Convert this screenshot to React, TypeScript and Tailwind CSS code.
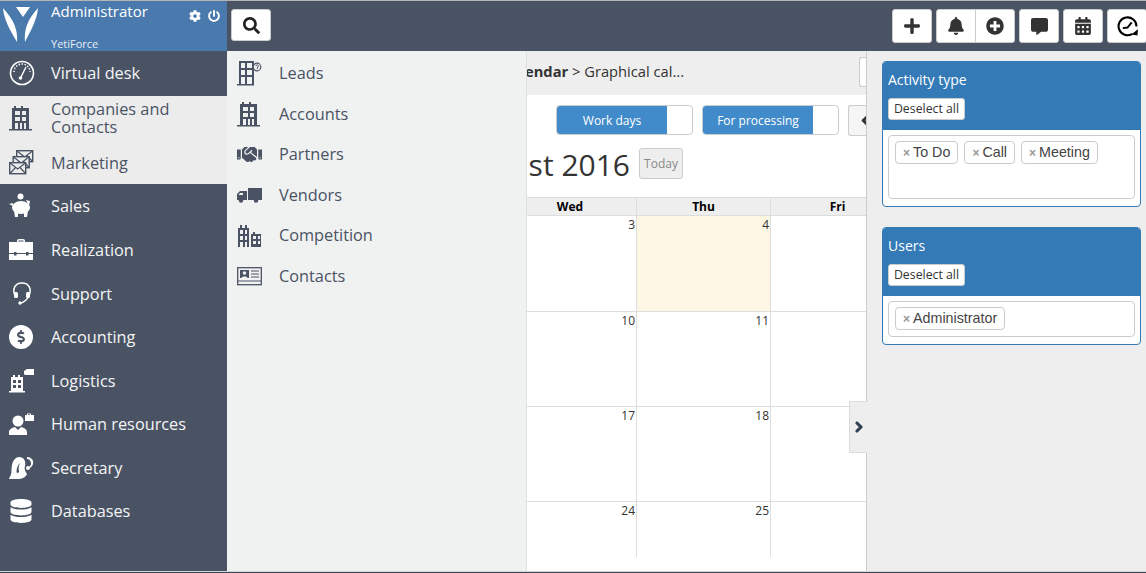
import type { ReactNode } from 'react';
import {
  FaBell,
  FaCalendarAlt,
  FaChevronLeft,
  FaChevronRight,
  FaCog,
  FaCommentAlt,
  FaDatabase,
  FaDollarSign,
  FaHandshake,
  FaPlus,
  FaPlusCircle,
  FaPowerOff,
  FaSearch,
} from 'react-icons/fa';

const openSans = "font-['Open_Sans','Noto_Sans',sans-serif]";

function Logo() {
  return (
    <svg width="40" height="44" viewBox="0 0 40 44" fill="white">
      <path d="M16 6h14l-7 10z" />
      <path d="M3 7c1 12 7 22 14 34 1-12-3-22-14-34z" />
      <path d="M38 7c-1 12-7 22-13 34-1-12 2-22 13-34z" />
    </svg>
  );
}

function Gauge() {
  return (
    <svg width="26" height="26" viewBox="0 0 26 26" fill="none" stroke="white">
      <circle cx="13" cy="13" r="11.500" strokeWidth="1.600" />
      <path d="M5 12a8 8 0 0 1 16 0" strokeWidth="1.400" strokeDasharray="1.500 1.500" />
      <path d="M12 17l5-10" strokeWidth="1.400" />
      <circle cx="11.500" cy="18" r="1.800" fill="white" stroke="none" />
    </svg>
  );
}

function Building() {
  return (
    <svg width="24" height="26" viewBox="0 0 24 26" fill="currentColor">
      <path
        fillRule="evenodd"
        d="M3 3h2V1h2v2h5V1h2v2h6v21H3zM6 6v4h5V6zm7 0v4h4V6zM6 12v4h5v-4zm7 0v4h4v-4zM6 18v6h3v-6zm5 0v6h2v-6zm4 0v6h2v-6z"
      />
      <rect x="0" y="24" width="23" height="1.500" />
    </svg>
  );
}

function LeadBuilding() {
  return (
    <svg width="25" height="26" viewBox="0 0 25 26" fill="currentColor">
      <path
        fillRule="evenodd"
        d="M2 1h15v23H2zM4 3v5h4V3zm6 0v5h5V3zM4 10v5h4v-5zm6 0v5h5v-5zM4 17v7h4v-7zm6 0v7h5v-7z"
      />
      <rect x="0" y="24" width="17" height="1.500" />
      <circle cx="20" cy="7" r="3.800" fill="#f0f1f1" stroke="currentColor" strokeWidth="1.200" />
      <path d="M18.800 6a1.300 1.300 0 1 1 1.500 1.500V9" fill="none" stroke="currentColor" strokeWidth="1" />
    </svg>
  );
}

function Envelope({ x, y }: { x: number; y: number }) {
  return (
    <g transform={`translate(${x} ${y})`}>
      <rect x="0.700" y="0.700" width="16" height="11" fill="#ececec" stroke="currentColor" strokeWidth="1.400" />
      <path d="M1 1l7.700 6 7.700-6M1 11.500l5.500-6M16.500 11.500l-5.500-6" fill="none" stroke="currentColor" strokeWidth="1.200" />
    </g>
  );
}

function Envelopes() {
  return (
    <svg width="25" height="25" viewBox="0 0 25 25">
      <Envelope x={7} y={0} />
      <Envelope x={3.500} y={6} />
      <Envelope x={0} y={12} />
    </svg>
  );
}

function Piggy() {
  return (
    <svg width="24" height="25" viewBox="0 0 24 25" fill="white">
      <circle cx="11.500" cy="3.500" r="3" />
      <ellipse cx="12" cy="14.500" rx="9" ry="6.500" />
      <path d="M17 7l4 1-1 5zM0 11l4-1v3zM5 18h4v6H6zM15 18h4l-1 6h-3z" />
    </svg>
  );
}

function Briefcase() {
  return (
    <svg width="24" height="23" viewBox="0 0 24 23" fill="white">
      <path fillRule="evenodd" d="M8 4V2.500Q8 1 10 1h4q2 0 2 1.500V4zM9.500 3.500h5V2.500h-5z" />
      <rect x="0" y="4" width="24" height="11" />
      <rect x="0" y="16" width="24" height="6" />
      <rect x="5" y="14" width="2.500" height="3.500" fill="#4a5364" />
      <rect x="17" y="14" width="2.500" height="3.500" fill="#4a5364" />
    </svg>
  );
}

function Headset() {
  return (
    <svg width="18" height="24" viewBox="0 0 18 24" fill="none" stroke="white" strokeWidth="1.500" className="ml-[4px]">
      <path d="M2 14C-1 7 2 1 9 1s10 6 7 13c-1 2-2 3-3 4" />
      <rect x="1" y="10" width="4" height="6" rx="1.500" fill="white" stroke="none" />
      <rect x="13" y="10" width="4" height="6" rx="1.500" fill="white" stroke="none" />
      <path d="M13 18c-2 2-4 3-6 3" />
      <circle cx="7" cy="21" r="1.700" fill="white" stroke="none" />
    </svg>
  );
}

function Logistics() {
  return (
    <svg width="25" height="25" viewBox="0 0 25 25" fill="white">
      <path
        fillRule="evenodd"
        d="M2 9h2V7h2v2h3V7h2v2h3v14H2zM4 12v3h3v-3zm5 0v3h3v-3zM4 17v3h3v-3zm5 0v3h3v-3z"
      />
      <rect x="0" y="23" width="16" height="1.500" />
      <path d="M15 3l3-2h7v6h-9l-1-1z" />
    </svg>
  );
}

function Person() {
  return (
    <svg width="25" height="24" viewBox="0 0 25 24" fill="white">
      <circle cx="9" cy="9" r="5.500" />
      <path d="M0 23v-3c0-3 4-4.500 6-5l3 3 3-3c2 .5 6 2 6 5v3z" />
      <path fillRule="evenodd" d="M18 3V1.500h4V3h3v6h-9V3zM19 3h2v-.7h-2z" />
    </svg>
  );
}

function Secretary() {
  return (
    <svg width="25" height="24" viewBox="0 0 25 24" fill="white">
      <path d="M10 1c5 0 7 4 6 9-1 3 0 5 2 8-1 3-5 5-9 5H0c0-2 2-3 2-5 1-2 0-5 1-9 1-5 4-8 7-8z" />
      <path d="M11 7c-1 2-2 5-1 8 .5 1.500-2 3-2.500 1 0-3 1-7 3.500-9z" fill="#4a5364" />
      <path d="M18 1c4 0 7 3 6 7-.5 2-2 3-3 4l-1-1c1-1 2-2 2-3 .5-3-2-5-4-5zM19 10a2 2 0 1 1 0 4 2 2 0 0 1 0-4z" />
    </svg>
  );
}

function Truck() {
  return (
    <svg width="25" height="15" viewBox="0 0 25 15" fill="currentColor">
      <rect x="11" y="0" width="14" height="12" />
      <path fillRule="evenodd" d="M0 6l3-3h7v9H0zM3 5L1.500 7H6V5z" />
      <circle cx="4" cy="12.500" r="2.200" />
      <circle cx="19" cy="12.500" r="2.200" />
    </svg>
  );
}

function Competition() {
  return (
    <svg width="25" height="24" viewBox="0 0 25 24" fill="currentColor">
      <path
        fillRule="evenodd"
        d="M1 4h2V1h2v3h3V1h2v3h2v19H1zM3 6v4h3V6zm5 0v4h2V6zM3 12v4h3v-4zm5 0v4h2v-4zM3 18v5h3v-5zm5 0v5h2v-5z"
      />
      <path
        fillRule="evenodd"
        d="M14 10h2V8h2v2h6v13H14zm2 2v3h3v-3zm5 0v3h2v-3zm-5 5v3h3v-3zm5 0v3h2v-3z"
      />
    </svg>
  );
}

function ContactCard() {
  return (
    <svg width="25" height="19" viewBox="0 0 25 19" fill="none" stroke="currentColor">
      <rect x="0.700" y="0.700" width="23.600" height="17" strokeWidth="1.300" />
      <rect x="3" y="3" width="9" height="8" fill="currentColor" stroke="none" />
      <circle cx="7.500" cy="6" r="1.800" fill="#f0f1f1" stroke="none" />
      <path d="M4.500 11c0-2 6-2 6 0z" fill="#f0f1f1" stroke="none" />
      <path d="M14 4h8M14 7h8M14 10h8M1 14h23" strokeWidth="1" />
    </svg>
  );
}

function ClockHistory() {
  return (
    <svg width="21" height="21" viewBox="0 0 20 20" fill="none" stroke="black">
      <path d="M14.500 17A8.500 8.500 0 1 1 18.500 10" strokeWidth="2" />
      <path d="M5.500 11.500L10 11l4-5" strokeWidth="1.800" />
      <path d="M20 12.500l-.5 6-6-1z" fill="black" stroke="none" />
    </svg>
  );
}

function MainItem({ icon, label, h, active }: { icon: ReactNode; label: ReactNode; h: string; active?: boolean }) {
  return (
    <div className={`flex items-center ${h} ${active ? 'bg-[#ececec] text-[#4a5364]' : 'text-[#f4f5f6]'}`}>
      <div className="flex w-[51px] shrink-0 justify-start pl-[9px]">{icon}</div>
      <div className="text-[16.300px] leading-[18px]">{label}</div>
    </div>
  );
}

function SubItem({ icon, label }: { icon: ReactNode; label: string }) {
  return (
    <div className="flex h-[40.600px] items-center text-[#4a5364]">
      <div className="flex w-[52px] shrink-0 pl-[10px]">{icon}</div>
      <div className="text-[16.300px]">{label}</div>
    </div>
  );
}

function Sidebar() {
  return (
    <aside className="flex w-[227px] shrink-0 flex-col bg-[#4a5364]">
      <div className="flex h-[50px] bg-[#4a7aad] text-white">
        <div className="w-[51px] shrink-0">
          <Logo />
        </div>
        <div className="flex flex-1 flex-col justify-between">
          <div className="text-[15px] leading-[20px]">Administrator</div>
          <div className="text-[11px] leading-[14px] text-[#e6edf4]">YetiForce</div>
        </div>
        <div className="flex gap-[7px] pr-[7px] pt-[9px]">
          <FaCog size={12} />
          <FaPowerOff size={12} />
        </div>
      </div>
      <MainItem h="h-[45px] pb-[2px]" icon={<Gauge />} label="Virtual desk" />
      <MainItem h="h-[45px] pb-[2px]" active icon={<Building />} label="Companies and Contacts" />
      <MainItem h="h-[43px]" active icon={<Envelopes />} label="Marketing" />
      <MainItem h="h-[43.700px]" icon={<Piggy />} label="Sales" />
      <MainItem h="h-[43.700px]" icon={<Briefcase />} label="Realization" />
      <MainItem h="h-[43.700px] pt-px" icon={<Headset />} label="Support" />
      <MainItem
        h="h-[43.700px]"
        icon={
          <div className="flex h-[24px] w-[24px] items-center justify-center rounded-full bg-white text-[#4a5364]">
            <FaDollarSign size={14} />
          </div>
        }
        label="Accounting"
      />
      <MainItem h="h-[43.700px]" icon={<Logistics />} label="Logistics" />
      <MainItem h="h-[43.700px]" icon={<Person />} label="Human resources" />
      <MainItem h="h-[43.700px]" icon={<Secretary />} label="Secretary" />
      <MainItem h="h-[43px]" icon={<FaDatabase size={24} color="white" />} label="Databases" />
    </aside>
  );
}

function TopButton({ children, className = '' }: { children: ReactNode; className?: string }) {
  return (
    <div className={`flex h-[34px] items-center justify-center rounded-[3px] border border-[#ccc] bg-white text-[#333] ${className}`}>
      {children}
    </div>
  );
}

function TopBar() {
  return (
    <header className="flex h-[50px] shrink-0 items-start justify-between overflow-hidden bg-[#4a5364] pl-[4px] pt-[8px]">
      <div className="flex h-[32px] w-[40px] items-center justify-center rounded-[3px] border border-[#ccc] bg-white text-[#222]">
        <FaSearch size={17} />
      </div>
      <div className="-mr-[1px] flex gap-[4px]">
        <TopButton className="w-[40px]">
          <FaPlus size={18} />
        </TopButton>
        <div className="flex h-[34px] w-[79px] rounded-[3px] border border-[#ccc] bg-white text-[#333]">
          <div className="flex flex-1 items-center justify-center border-r border-[#ccc]">
            <FaBell size={18} />
          </div>
          <div className="flex flex-1 items-center justify-center">
            <FaPlusCircle size={18} />
          </div>
        </div>
        <TopButton className="w-[40px]">
          <FaCommentAlt size={17} />
        </TopButton>
        <TopButton className="w-[40px]">
          <FaCalendarAlt size={18} />
        </TopButton>
        <TopButton className="w-[40px]">
          <ClockHistory />
        </TopButton>
      </div>
    </header>
  );
}

function Toggle({ label }: { label: string }) {
  return (
    <div className="flex h-[30px] w-[137px] overflow-hidden rounded-[4px] border border-[#ccc] bg-white">
      <div className="flex w-[110px] items-center justify-center bg-[#428bca] pt-[2px] text-[12px] text-white">{label}</div>
    </div>
  );
}

function DayCell({ day, today }: { day?: number; today?: boolean }) {
  return (
    <div className={`border-r border-b border-[#ddd] pr-[1px] text-right text-[12px] leading-[18px] text-[#333] last:border-r-0 ${today ? 'bg-[#fcf6e3]' : ''}`}>
      {day}
    </div>
  );
}

function Calendar() {
  return (
    <div className="flex w-[340px] shrink-0 flex-col overflow-hidden border-r border-[#ccc] bg-white">
      <div className="flex h-[44px] shrink-0 items-start justify-end overflow-hidden whitespace-nowrap bg-[#eee] pt-[6px] text-[#333]">
        <div className="pt-[4px] text-[14.700px] leading-[20px]">
          <span className="font-bold">Calendar</span> &gt; Graphical cal...
        </div>
        <div className="ml-[175px] h-[30px] w-[7px] shrink-0 rounded-l-[3px] border border-r-0 border-[#ccc] bg-white" />
      </div>
      <div className="flex h-[53px] shrink-0 justify-end gap-[9px] overflow-hidden pt-[10px]">
        <Toggle label="Work days" />
        <Toggle label="For processing" />
        <div className="flex h-[31px] w-[18px] items-center overflow-hidden rounded-l-[3px] border border-r-0 border-[#ccc] bg-[#f5f5f5] pl-[10px] text-[#333]">
          <FaChevronLeft size={13} className="shrink-0" stroke="currentColor" strokeWidth={40} />
        </div>
      </div>
      <div className="flex h-[49px] shrink-0 items-start justify-end gap-[9px] overflow-hidden whitespace-nowrap pr-[183px]">
        <div className="-mt-px text-[30px] leading-[36px] text-[#333]">August 2016</div>
        <div className="flex h-[31px] w-[44px] shrink-0 items-center justify-center rounded-[3px] border border-[#ccc] bg-[#eee] text-[12px] text-[#888]">
          Today
        </div>
      </div>
      <div className="-ml-[23px] grid grid-cols-[133px_134px_134px] border-t border-[#ddd]">
        {['Wed', 'Thu', 'Fri'].map((d) => (
          <div key={d} className="h-[18px] border-r border-b border-[#ddd] bg-[#eee] text-center text-[12px] font-bold leading-[17px] text-black">
            {d}
          </div>
        ))}
        <div className="contents [&>div]:h-[96px]">
          <DayCell day={3} />
          <DayCell day={4} today />
          <DayCell />
        </div>
        <div className="contents [&>div]:h-[95px]">
          <DayCell day={10} />
          <DayCell day={11} />
          <DayCell />
        </div>
        <div className="contents [&>div]:h-[95px]">
          <DayCell day={17} />
          <DayCell day={18} />
          <DayCell />
        </div>
        <div className="contents [&>div]:h-[55px] [&>div]:border-b-0">
          <DayCell day={24} />
          <DayCell day={25} />
          <DayCell />
        </div>
      </div>
    </div>
  );
}

function Tag({ label }: { label: string }) {
  return (
    <div className="flex h-[23px] items-center gap-[3px] rounded-[4px] border border-[#ccc] bg-white pl-[7px] pr-[7px] font-['Liberation_Sans',Arial,sans-serif] text-[14.300px] text-[#444]">
      <span className="text-[12px] font-bold leading-none text-[#999]">×</span>
      {label}
    </div>
  );
}

function FilterPanel({ title, tags, boxH }: { title: string; tags: string[]; boxH: string }) {
  return (
    <section className="w-[259px] overflow-hidden rounded-[4px] border border-[#337ab7] bg-white">
      <div className="h-[68px] bg-[#337ab7] pl-[5px] pt-[8px]">
        <div className="text-[14px] leading-[20px] text-white">{title}</div>
        <div className="mt-[8px] flex h-[22px] w-[77px] items-center justify-center rounded-[3px] border border-[#ccc] bg-white text-[12.300px] text-[#333]">
          Deselect all
        </div>
      </div>
      <div className="px-[5px] pb-[7px] pt-[5px]">
        <div className={`flex items-start gap-[6px] rounded-[4px] border border-[#ccc] px-[6px] pt-[5px] ${boxH}`}>
          {tags.map((t) => (
            <Tag key={t} label={t} />
          ))}
        </div>
      </div>
    </section>
  );
}

export default function App() {
  return (
    <div className={`flex h-[573px] w-[1146px] flex-col overflow-hidden bg-[#eee] ${openSans}`}>
      <div className="h-px shrink-0 bg-[#b5b5b5]" />
      <div className="flex h-[570px] shrink-0">
        <Sidebar />
        <div className="flex min-w-0 flex-1 flex-col">
          <TopBar />
          <div className="relative flex min-h-0 flex-1">
            <nav className="w-[300px] shrink-0 border-r border-[#e0e0e0] bg-[#f0f1f1] pt-[2px]">
              <SubItem icon={<LeadBuilding />} label="Leads" />
              <SubItem icon={<Building />} label="Accounts" />
              <SubItem icon={<FaHandshake size={25} />} label="Partners" />
              <SubItem icon={<Truck />} label="Vendors" />
              <SubItem icon={<Competition />} label="Competition" />
              <SubItem icon={<ContactCard />} label="Contacts" />
            </nav>
            <Calendar />
            <div className="flex flex-1 flex-col gap-[20px] pl-[15px] pt-[10px]">
              <FilterPanel title="Activity type" tags={['To Do', 'Call', 'Meeting']} boxH="h-[64px]" />
              <FilterPanel title="Users" tags={['Administrator']} boxH="h-[36px]" />
            </div>
            <div className="absolute left-[622px] top-[350px] flex h-[52px] w-[18px] items-center justify-center border border-r-0 border-[#ddd] bg-[#eee] text-[#2c3e50]">
              <FaChevronRight size={12} stroke="currentColor" strokeWidth={50} />
            </div>
          </div>
        </div>
      </div>
      <div className="h-px shrink-0 bg-[#d5d5d5]" />
      <div className="h-px shrink-0 bg-[#3d4657]" />
    </div>
  );
}
